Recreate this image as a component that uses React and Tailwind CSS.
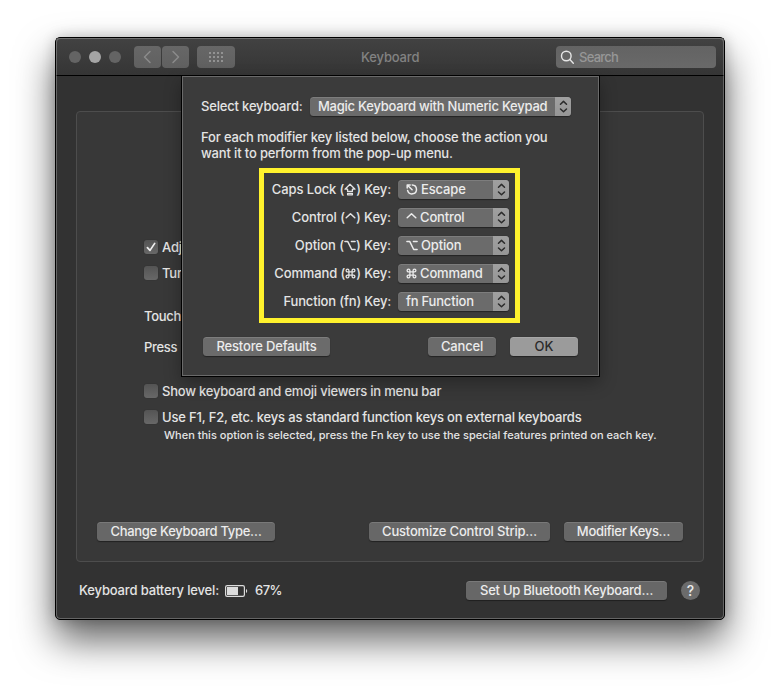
import React from 'react';

function Updown() {
  return (
    <span className="flex h-[19px] w-4 shrink-0 items-center justify-center rounded-r-[3.5px] bg-gradient-to-b from-[#a0a0a0] to-[#969696]">
      <svg width="16" height="19" viewBox="0 0 16 19" fill="none" stroke="#2b2b2b" strokeWidth="1.5" strokeLinecap="round" strokeLinejoin="round">
        <path d="M5.5 7.2 8.5 4.4l3 2.8M5.5 12l3 2.8 3-2.8" />
      </svg>
    </span>
  );
}

function Glyph({ name }) {
  const common = { height: 13, fill: 'none', stroke: 'currentColor', strokeWidth: 1.5, strokeLinecap: 'round', strokeLinejoin: 'round', className: 'inline-block shrink-0 align-[-2px]' };
  if (name === 'caps')
    return (
      <svg width="12" viewBox="0 0 12 13" {...common} strokeWidth="1.3">
        <path d="M6 1.2 1 6.2h2.6v2.2h4.8V6.2H11zM3.6 10.3h4.8v1.5H3.6z" />
      </svg>
    );
  if (name === 'control')
    return (
      <svg width="11" viewBox="0 0 11 13" {...common}>
        <path d="M1.2 6.8 5.5 2.7l4.3 4.1" />
      </svg>
    );
  if (name === 'option')
    return (
      <svg width="12" viewBox="0 0 12 13" {...common}>
        <path d="M.9 2.6h2.9l3.9 7.9h3.4M7.4 2.6h3.7" />
      </svg>
    );
  if (name === 'command')
    return (
      <svg width="11" viewBox="0 0 11 13" {...common} strokeWidth="1.3">
        <path d="M3.9 4.9h3.2v3.2H3.9zM3.9 4.9H2.5a1.4 1.4 0 1 1 1.4-1.4zM7.1 4.9V3.5a1.4 1.4 0 1 1 1.4 1.4zM7.1 8.1h1.4a1.4 1.4 0 1 1-1.4 1.4zM3.9 8.1v1.4a1.4 1.4 0 1 1-1.4-1.4z" />
      </svg>
    );
  return (
    <svg width="12" viewBox="0 0 12 13" {...common}>
      <path d="M6.2 1.9A4.5 4.5 0 1 1 1.6 7.4M1.2 5V2h3M1.5 2.2l4.6 4.5" />
    </svg>
  );
}

function Button({ className, children }) {
  return (
    <button className={'flex h-[19px] shrink-0 items-center justify-center rounded-[3.5px] pb-px text-[13px] font-medium leading-4 whitespace-nowrap shadow-[0_0.5px_1px_rgba(0,0,0,0.4),inset_0_1px_0_rgba(255,255,255,0.12)] ' + className}>
      {children}
    </button>
  );
}

function Check({ checked }) {
  return (
    <span className="flex size-3.5 shrink-0 items-center justify-center rounded-[3px] bg-gradient-to-b from-[#545454] to-[#686868] shadow-[0_0_1px_rgba(0,0,0,0.4)]">
      {checked && (
        <svg width="14" height="14" viewBox="0 0 14 14" fill="none" stroke="#f0f0f0" strokeWidth="1.7" strokeLinecap="round" strokeLinejoin="round">
          <path d="M3.4 7.6 6 10.4l4.7-7" />
        </svg>
      )}
    </span>
  );
}

function KeyRow({ label, icon, menuIcon = icon, value, tracking }) {
  return (
    <div className="flex h-[19px] items-center">
      <div className={'w-[127px] pb-px text-right whitespace-nowrap ' + tracking}>
        {label} ({icon ? <Glyph name={icon} /> : 'fn'}) Key:
      </div>
      <div className="ml-[7px] flex h-[19px] w-[111px] items-center rounded-[3.5px] bg-[#6b6b6b] font-medium text-[#ececec] shadow-[0_0.5px_1px_rgba(0,0,0,0.4),inset_0_1px_0_rgba(255,255,255,0.12)]">
        <span className="flex flex-1 items-center gap-[3px] pb-px pl-2 tracking-[-0.15px] whitespace-nowrap">
          {menuIcon ? <Glyph name={menuIcon} /> : <span>fn</span>}
          <span>{value}</span>
        </span>
        <Updown />
      </div>
    </div>
  );
}

function Toolbar() {
  return (
    <div className="relative flex h-[38px] items-center border-b border-black bg-gradient-to-b from-[#424242] to-[#353535] pr-2 pl-[13px]">
      <div className="flex gap-2">
        <span className="size-3 rounded-full bg-[#646464]" />
        <span className="size-3 rounded-full bg-[#a5a5a5]" />
        <span className="size-3 rounded-full bg-[#646464]" />
      </div>
      <div className="ml-[13px] flex gap-px">
        <span className="flex h-[22px] w-[27px] rounded-[4px] bg-gradient-to-b from-[#676767] to-[#606060]">
          <svg width="27" height="22" fill="none" stroke="#8b8b8b" strokeWidth="1.5" strokeLinecap="round" strokeLinejoin="round"><path d="M16 5.5 10.5 11l5.5 5.5" /></svg>
        </span>
        <span className="flex h-[22px] w-[27px] rounded-[4px] bg-gradient-to-b from-[#676767] to-[#606060]">
          <svg width="27" height="22" fill="none" stroke="#8b8b8b" strokeWidth="1.5" strokeLinecap="round" strokeLinejoin="round"><path d="M11 5.5 16.5 11 11 16.5" /></svg>
        </span>
      </div>
      <span className="ml-2 flex h-[22px] w-[38px] rounded-[4px] bg-gradient-to-b from-[#676767] to-[#606060]">
        <svg width="38" height="22" fill="#929292">
          {[6, 10, 14].map((y) => [12, 16, 20, 24].map((x) => <rect key={x + '-' + y} x={x} y={y} width="2" height="2" />))}
        </svg>
      </span>
      <span className="ml-[126px] text-[13px] tracking-[-0.15px] text-[#828282]">Keyboard</span>
      <div className="ml-auto flex h-[22px] w-40 items-center rounded-[4px] bg-gradient-to-b from-[#636363] to-[#696969]">
        <svg className="ml-1" width="15" height="16" viewBox="0 0 15 16" fill="none" stroke="#e6e6e6" strokeWidth="1.4" strokeLinecap="round">
          <circle cx="6.3" cy="7" r="4.8" />
          <path d="m9.9 10.6 3.4 3.6" />
        </svg>
        <span className="ml-1 text-[13px] tracking-[-0.75px] text-[#979797]">Search</span>
      </div>
    </div>
  );
}

function Sheet() {
  return (
    <div className="absolute top-[38px] left-[125px] h-[301px] w-[419px] border-x border-b border-black bg-[#3b3b3b] shadow-[0_6px_16px_rgba(0,0,0,0.3)]">
      <div className="flex h-full flex-col border border-[#6a6a6a]">
        <div className="mt-5 flex h-[19px] items-center pl-[18px]">
          <span className="w-[109px] pb-px tracking-[-0.18px] whitespace-nowrap">Select keyboard:</span>
          <div className="flex h-[19px] w-[261px] items-center rounded-[3.5px] bg-[#6b6b6b] font-medium text-[#ececec] shadow-[0_0.5px_1px_rgba(0,0,0,0.4),inset_0_1px_0_rgba(255,255,255,0.12)]">
            <span className="flex-1 pb-px pl-2 tracking-[-0.24px] whitespace-nowrap">Magic Keyboard with Numeric Keypad</span>
            <Updown />
          </div>
        </div>
        <p className="mt-[13px] ml-[18px] leading-4 tracking-[-0.16px] whitespace-nowrap">
          For each modifier key listed below, choose the action you
          <br />
          want it to perform from the pop-up menu.
        </p>
        <div className="mt-[7px] ml-[76px] flex h-[155px] w-[261px] flex-col gap-[9px] border-[5px] border-[#fff22d] pt-[7px]">
          <KeyRow label="Caps Lock" icon="caps" menuIcon="escape" value="Escape" tracking="tracking-[-0.12px]" />
          <KeyRow label="Control" icon="control" value="Control" tracking="tracking-[-0.07px]" />
          <KeyRow label="Option" icon="option" value="Option" tracking="tracking-[-0.07px]" />
          <KeyRow label="Command" icon="command" value="Command" tracking="tracking-[-0.12px]" />
          <KeyRow label="Function" value="Function" tracking="tracking-[-0.15px]" />
        </div>
        <div className="mt-3.5 flex pr-5 pl-5">
          <Button className="w-[127px] bg-[#6b6b6b] tracking-[-0.15px] text-[#ececec]">Restore Defaults</Button>
          <Button className="ml-auto w-[68px] bg-[#6b6b6b] tracking-[-0.2px] text-[#ececec]">Cancel</Button>
          <Button className="ml-3.5 w-[68px] bg-[#9b9b9b] text-[#2a2a2a]">OK</Button>
        </div>
      </div>
    </div>
  );
}

export default function App() {
  return (
    <div className="h-[693px] w-[780px] overflow-hidden bg-white pt-[37px] pl-[55px] font-['Inter','Liberation_Sans',sans-serif] text-[13px] leading-4 font-[450] text-[#e4e4e4]">
      <div className="relative flex h-[583px] w-[670px] flex-col rounded-[5px] border border-black bg-[#323232] shadow-[0_20px_38px_rgba(0,0,0,0.62),0_0_14px_rgba(0,0,0,0.2)]">
        <Toolbar />
        <div className="mx-5 mt-[35px] flex h-[451px] flex-col rounded-[4px] border border-[#4d4d4d] bg-[#383838]">
          <div className="mt-32 ml-[67px] flex h-3.5 items-center gap-1"><Check checked /><span className="tracking-[-0.16px] whitespace-nowrap">Adj</span></div>
          <div className="mt-3 ml-[67px] flex h-3.5 items-center gap-1"><Check /><span className="tracking-[-0.16px] whitespace-nowrap">Tur</span></div>
          <div className="mt-[28px] ml-[67px] tracking-[-0.3px]">Touch</div>
          <div className="mt-[15px] ml-[67px] tracking-[-0.3px]">Press</div>
          <div className="mt-[29px] ml-[67px] flex h-3.5 items-center gap-1"><Check /><span className="tracking-[-0.22px] whitespace-nowrap">Show keyboard and emoji viewers in menu bar</span></div>
          <div className="mt-3 ml-[67px] flex h-3.5 items-center gap-1"><Check /><span className="tracking-[-0.175px] whitespace-nowrap">Use F1, F2, etc. keys as standard function keys on external keyboards</span></div>
          <div className="mt-1 ml-[87px] text-[11px] leading-[14px] tracking-[0.01px] whitespace-nowrap">When this option is selected, press the Fn key to use the special features printed on each key.</div>
          <div className="mt-auto mb-5 flex px-5 text-[#ececec]">
            <Button className="w-[178px] bg-[#676767] tracking-[-0.3px]">Change Keyboard Type…</Button>
            <Button className="ml-auto w-[181px] bg-[#676767] tracking-[-0.2px]">Customize Control Strip…</Button>
            <Button className="ml-3.5 w-[119px] bg-[#676767] tracking-[-0.3px]">Modifier Keys…</Button>
          </div>
        </div>
        <div className="mt-[19px] flex h-[19px] items-center pr-6 pl-[23px]">
          <span className="w-[146px] pb-px tracking-[-0.15px] whitespace-nowrap">Keyboard battery level:</span>
          <svg width="24" height="12" viewBox="0 0 24 12" fill="none">
            <rect x="0.6" y="0.6" width="18.8" height="10.8" rx="1.6" stroke="#dcdcdc" strokeWidth="1.2" />
            <rect x="2" y="2" width="11" height="8" fill="#dcdcdc" />
            <path d="M21 4c1.6.6 1.6 3.4 0 4z" fill="#dcdcdc" />
          </svg>
          <span className="ml-[6px] pb-px tracking-[-0.5px]">67%</span>
          <Button className="ml-auto w-[201px] bg-[#676767] tracking-[-0.25px] text-[#ececec]">Set Up Bluetooth Keyboard…</Button>
          <button className="ml-3.5 flex size-[19px] items-center justify-center rounded-full bg-[#6b6b6b] text-[14px] leading-none text-[#ececec]">?</button>
        </div>
        <Sheet />
        <div className="pointer-events-none absolute inset-0 rounded-[4px] border border-white/25" />
      </div>
    </div>
  );
}
